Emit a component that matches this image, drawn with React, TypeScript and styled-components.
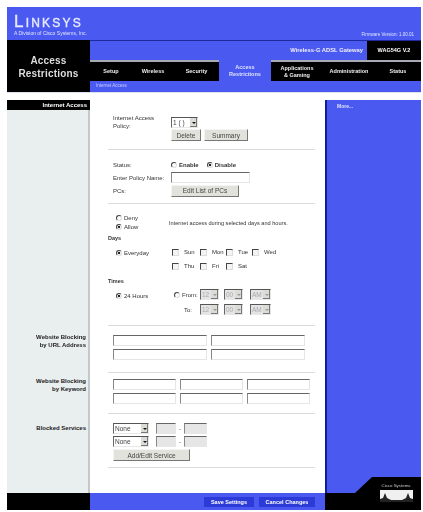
import styled, { createGlobalStyle } from "styled-components";

const GlobalStyle = createGlobalStyle`
  html, body {
    margin: 0;
    padding: 0;
    background: #fff;
    font-family: "Liberation Sans", Arial, sans-serif;
    font-size: 6px;
    color: #333;
  }
`;

const BLUE = "#4a5af0";

const Page = styled.div`
  width: 414px;
  height: 503px;
  margin: 7px 0 0 7px;
  display: flex;
  flex-direction: column;
  filter: blur(0.45px);
`;

const Banner = styled.div`
  height: 33px;
  background: ${BLUE};
  display: flex;
  justify-content: space-between;
  padding: 7px 7px 3px 7px;
  box-sizing: border-box;
`;

const Logo = styled.div`
  display: flex;
  flex-direction: column;
  color: #fff;
`;

const LogoWord = styled.div`
  font-size: 17px;
  line-height: 15px;
  font-weight: 400;
  font-variant: small-caps;
  letter-spacing: 2.2px;
  font-family: "Liberation Sans", sans-serif;
  color: #e6e9ff;
  -webkit-text-stroke: 0.4px #e6e9ff;
`;

const LogoSub = styled.div`
  font-size: 5px;
  line-height: 6px;
  margin-top: 1px;
  color: #dfe3ff;
`;

const Firmware = styled.div`
  align-self: flex-end;
  color: #dfe3ff;
  font-size: 4.5px;
`;

const TopBar = styled.div`
  height: 52px;
  display: grid;
  grid-template-columns: 83px 1fr;
`;

const PageTitle = styled.div`
  background: #000;
  color: #ddd;
  font-size: 10px;
  line-height: 13px;
  font-weight: 700;
  text-align: center;
  padding-top: 14px;
  box-sizing: border-box;
  letter-spacing: 0.2px;
`;

const NavColumn = styled.div`
  display: flex;
  flex-direction: column;
  border-top: 1px solid #1c2a9c;
`;

const ProductRow = styled.div`
  height: 19px;
  display: flex;
  background: ${BLUE};
`;

const ProductName = styled.div`
  flex: 1;
  text-align: right;
  padding-right: 4px;
  color: #eef;
  font-weight: 700;
  font-size: 5.8px;
  line-height: 19px;
`;

const ModelName = styled.div`
  width: 54px;
  background: #000;
  color: #fff;
  font-weight: 700;
  font-size: 5.5px;
  line-height: 19px;
  text-align: center;
`;

const Tabs = styled.div`
  height: 21px;
  display: flex;
  background: #000;
  color: #eee;
  border-top: 2px solid #a9abb4;
  box-sizing: border-box;
`;

const Tab = styled.div<{ $width: number; $active?: boolean }>`
  width: ${(p) => p.$width}px;
  display: flex;
  align-items: center;
  justify-content: center;
  text-align: center;
  font-weight: 700;
  font-size: 5.5px;
  line-height: 7px;
  ${(p) =>
    p.$active &&
    `
    background: ${BLUE};
    margin-top: -2px;
    height: 21px;
    color: #dfe3ff;
  `}
`;

const SubTabs = styled.div`
  height: 11px;
  background: ${BLUE};
  color: #c7ccff;
  font-size: 4.5px;
  line-height: 10px;
  padding-left: 6px;
`;

const Gap = styled.div`
  height: 8px;
  background: #fff;
  border-top: 1px solid #dde2ee;
  box-sizing: border-box;
`;

const Content = styled.div`
  height: 393px;
  display: grid;
  grid-template-columns: 1fr 96px;
`;

const Rows = styled.div`
  display: flex;
  flex-direction: column;
`;

const Row = styled.div<{ $height: number; $grow?: boolean }>`
  display: grid;
  grid-template-columns: 83px 1fr;
  height: ${(p) => p.$height}px;
  ${(p) => p.$grow && "flex: 1;"}
`;

const Side = styled.div`
  background: #e9eeee;
  border-right: 2px solid #c4c8c8;
  text-align: right;
  padding-right: 2px;
  width: 79px;
  font-weight: 700;
  font-size: 6px;
  line-height: 8px;
  color: #222;
`;

const SideHead = styled.div`
  background: #000;
  color: #fff;
  height: 10px;
  line-height: 10px;
  margin-right: -4px;
  padding-right: 3px;
  font-size: 6px;
`;

const SideLabel = styled.div<{ $top: number }>`
  padding-top: ${(p) => p.$top}px;
`;

const Main = styled.div`
  padding: 0 10px 0 18px;
  background: #fff;
`;

const Section = styled.div<{ $height: number; $top: number }>`
  height: ${(p) => p.$height}px;
  padding: ${(p) => p.$top}px 0 0 5px;
  box-sizing: border-box;
  border-bottom: 1px solid #dcdcdc;
`;

const FormRow = styled.div<{ $height: number }>`
  display: grid;
  grid-template-columns: 58px 1fr;
  align-items: center;
  height: ${(p) => p.$height}px;
`;

const Inline = styled.div<{ $gap?: number }>`
  display: flex;
  align-items: center;
  gap: ${(p) => p.$gap ?? 3}px;
`;

const Label = styled.div`
  line-height: 8px;
`;

const AccessNote = styled.div`
  font-size: 5.6px;
`;

const StrongLabel = styled.span`
  font-weight: 700;
`;

const Heading = styled.div<{ $top: number }>`
  font-weight: 700;
  font-size: 5.5px;
  line-height: 9px;
  margin: ${(p) => p.$top}px 0 0 -5px;
`;

// the arrow button of a classic windows select
const SelectBox = styled.div<{ $width: number; $off?: boolean }>`
  position: relative;
  width: ${(p) => p.$width}px;
  height: 11px;
  box-sizing: border-box;
  border: 1px solid #e8e8e8;
  border-top-color: #555;
  border-left-color: #666;
  background: ${(p) => (p.$off ? "#e4e4e4" : "#fff")};
  &::before {
    content: "";
    position: absolute;
    top: 0;
    right: 0;
    width: 7px;
    height: 9px;
    background: #dcdcd6;
    border-right: 1px solid #777;
    border-bottom: 1px solid #777;
    box-sizing: border-box;
  }
  &::after {
    content: "";
    position: absolute;
    top: 4px;
    right: 1.5px;
    border: 2px solid transparent;
    border-top: 2.5px solid ${(p) => (p.$off ? "#999" : "#111")};
    border-bottom: 0;
  }
`;

const NativeSelect = styled.select`
  appearance: none;
  display: block;
  width: 100%;
  height: 9px;
  border: 0;
  margin: 0;
  padding: 0 0 0 1px;
  background: transparent;
  font-family: "Liberation Sans", sans-serif;
  font-size: 6.5px;
  line-height: 9px;
  color: #444;
  &:disabled {
    color: #aaa;
    opacity: 1;
  }
`;

const TextInput = styled.input<{ $width: number; $muted?: boolean }>`
  width: ${(p) => p.$width}px;
  height: 11px;
  box-sizing: border-box;
  margin: 0;
  padding: 0;
  border: 1px solid #e6e6e6;
  border-top-color: #666;
  border-left-color: #888;
  background: ${(p) => (p.$muted ? "#e6e6e6" : "#fff")};
`;

const Button = styled.button<{ $width: number }>`
  width: ${(p) => p.$width}px;
  height: 12px;
  padding: 0;
  margin: 0;
  box-sizing: border-box;
  background: #e2e2dc;
  border: 1px solid;
  border-color: #f4f4f4 #777 #777 #f4f4f4;
  font-family: "Liberation Sans", sans-serif;
  font-size: 6.5px;
  color: #444;
`;

const Radio = styled.input.attrs({ type: "radio" })`
  appearance: none;
  flex: none;
  width: 6px;
  height: 6px;
  margin: 0 2px 0 0;
  box-sizing: border-box;
  border-radius: 50%;
  border: 1px solid;
  border-color: #444 #ddd #ddd #444;
  background: #fff;
  &:checked {
    background: radial-gradient(circle, #222 0 1.3px, #fff 1.6px);
  }
`;

const Check = styled.input.attrs({ type: "checkbox" })`
  appearance: none;
  flex: none;
  width: 7px;
  height: 7px;
  margin: 0 5px 0 0;
  box-sizing: border-box;
  border: 1px solid;
  border-color: #444 #ddd #ddd #444;
  background: #f4f4f4;
`;

const Choice = styled.label`
  display: inline-flex;
  align-items: center;
`;

const DayGrid = styled.div`
  display: grid;
  grid-template-columns: 28px 26px 26px 26px;
  row-gap: 7px;
  line-height: 7px;
`;

const Stack = styled.div<{ $gap: number }>`
  display: flex;
  flex-direction: column;
  gap: ${(p) => p.$gap}px;
`;

const AccessRow = styled.div`
  display: grid;
  grid-template-columns: 53px 1fr;
  align-items: center;
  margin-left: 3px;
`;

const DaysRow = styled.div`
  display: grid;
  grid-template-columns: 56px 1fr;
  margin: 6px 0 0 3px;
  align-items: start;
`;

const EverydayChoice = styled(Choice)`
  height: 7px;
`;

const TimesRow = styled.div`
  display: grid;
  grid-template-columns: 58px 1fr;
  margin: 1px 0 0 3px;
  align-items: start;
`;

const HoursChoice = styled(Choice)`
  height: 17px;
`;

const TimeLine = styled.div`
  display: grid;
  grid-template-columns: 21px 19px 19px 23px;
  column-gap: 5px;
  align-items: center;
  height: 15px;
`;

const ToLabel = styled.div`
  text-align: right;
  padding-right: 3px;
`;

const LastSlot = styled.div`
  justify-self: end;
`;

const InputGrid = styled.div<{ $cols: string }>`
  display: grid;
  grid-template-columns: ${(p) => p.$cols};
  column-gap: 4px;
  row-gap: 3px;
`;

const Aside = styled.div`
  background: ${BLUE};
  border-left: 2px solid #111d9a;
  color: #dfe3ff;
  font-size: 5px;
  font-weight: 700;
  padding: 3px 0 0 10px;
`;

const Footer = styled.div`
  height: 17px;
  display: grid;
  grid-template-columns: 83px 1fr 96px;
`;

const FooterLeft = styled.div`
  background: #000;
`;

const FooterBar = styled.div`
  background: ${BLUE};
  display: flex;
  justify-content: flex-end;
  align-items: center;
  gap: 5px;
  padding-right: 10px;
`;

const FooterButton = styled.div<{ $width: number }>`
  width: ${(p) => p.$width}px;
  height: 10px;
  background: #2c3bd8;
  color: #fff;
  font-weight: 700;
  font-size: 5.5px;
  line-height: 10px;
  text-align: center;
`;

const FooterRight = styled.div`
  background: #000;
  position: relative;
`;

const CornerMark = styled.svg`
  position: absolute;
  left: 0;
  bottom: 0;
`;

function Days() {
  const days = ["Sun", "Mon", "Tue", "Wed", "Thu", "Fri", "Sat"];
  return (
    <DayGrid>
      {days.map((d) => (
        <Choice key={d}>
          <Check />
          {d}
        </Choice>
      ))}
    </DayGrid>
  );
}

function Dropdown({
  width,
  value,
  off,
}: {
  width: number;
  value: string;
  off?: boolean;
}) {
  return (
    <SelectBox $width={width} $off={off}>
      <NativeSelect disabled={off}>
        <option>{value}</option>
      </NativeSelect>
    </SelectBox>
  );
}

function TimeSelects() {
  return (
    <>
      <Dropdown width={19} value="12" off />
      <Dropdown width={19} value="00" off />
      <LastSlot>
        <Dropdown width={21} value="AM" off />
      </LastSlot>
    </>
  );
}

function ServiceRow() {
  return (
    <Inline $gap={7}>
      <Dropdown width={36} value="None" />
      <Inline $gap={3}>
        <TextInput $width={20} $muted />-
        <TextInput $width={23} $muted />
      </Inline>
    </Inline>
  );
}

export default function App() {
  return (
    <>
      <GlobalStyle />
      <Page>
        <Banner>
          <Logo>
            <LogoWord>Linksys</LogoWord>
            <LogoSub>A Division of Cisco Systems, Inc.</LogoSub>
          </Logo>
          <Firmware>Firmware Version: 1.00.01</Firmware>
        </Banner>
        <TopBar>
          <PageTitle>
            Access
            <br />
            Restrictions
          </PageTitle>
          <NavColumn>
            <ProductRow>
              <ProductName>Wireless-G ADSL Gateway</ProductName>
              <ModelName>WAG54G V.2</ModelName>
            </ProductRow>
            <Tabs>
              <Tab $width={42}>Setup</Tab>
              <Tab $width={42}>Wireless</Tab>
              <Tab $width={45}>Security</Tab>
              <Tab $width={52} $active>
                Access
                <br />
                Restrictions
              </Tab>
              <Tab $width={52}>
                Applications
                <br />& Gaming
              </Tab>
              <Tab $width={52}>Administration</Tab>
              <Tab $width={46}>Status</Tab>
            </Tabs>
            <SubTabs>Internet Access</SubTabs>
          </NavColumn>
        </TopBar>
        <Gap />
        <Content>
          <Rows>
            <Row $height={226}>
              <Side>
                <SideHead>Internet Access</SideHead>
              </Side>
              <Main>
                <Section $height={50} $top={14}>
                  <FormRow $height={14}>
                    <Label>
                      Internet Access
                      <br />
                      Policy:
                    </Label>
                    <Dropdown width={27} value="1 ( )" />
                  </FormRow>
                  <FormRow $height={14}>
                    <span />
                    <Inline>
                      <Button $width={30}>Delete</Button>
                      <Button $width={44}>Summary</Button>
                    </Inline>
                  </FormRow>
                </Section>
                <Section $height={54} $top={8}>
                  <FormRow $height={13}>
                    <Label>Status:</Label>
                    <Inline $gap={8}>
                      <Choice>
                        <Radio name="status" />
                        <StrongLabel>Enable</StrongLabel>
                      </Choice>
                      <Choice>
                        <Radio name="status" defaultChecked />
                        <StrongLabel>Disable</StrongLabel>
                      </Choice>
                    </Inline>
                  </FormRow>
                  <FormRow $height={13}>
                    <Label>Enter Policy Name:</Label>
                    <TextInput $width={79} />
                  </FormRow>
                  <FormRow $height={13}>
                    <Label>PCs:</Label>
                    <Button $width={68}>Edit List of PCs</Button>
                  </FormRow>
                </Section>
                <Section $height={122} $top={11}>
                  <AccessRow>
                    <Stack $gap={3}>
                      <Choice>
                        <Radio name="access" />
                        Deny
                      </Choice>
                      <Choice>
                        <Radio name="access" defaultChecked />
                        Allow
                      </Choice>
                    </Stack>
                    <AccessNote>
                      Internet access during selected days and hours.
                    </AccessNote>
                  </AccessRow>
                  <Heading $top={4}>Days</Heading>
                  <DaysRow>
                    <EverydayChoice>
                      <Radio defaultChecked />
                      Everyday
                    </EverydayChoice>
                    <Days />
                  </DaysRow>
                  <Heading $top={7}>Times</Heading>
                  <TimesRow>
                    <HoursChoice>
                      <Radio defaultChecked />
                      24 Hours
                    </HoursChoice>
                    <Stack $gap={0}>
                      <TimeLine>
                        <Choice>
                          <Radio />
                          From:
                        </Choice>
                        <TimeSelects />
                      </TimeLine>
                      <TimeLine>
                        <ToLabel>To:</ToLabel>
                        <TimeSelects />
                      </TimeLine>
                    </Stack>
                  </TimesRow>
                </Section>
              </Main>
            </Row>
            <Row $height={47}>
              <Side>
                <SideLabel $top={7}>
                  Website Blocking
                  <br />
                  by URL Address
                </SideLabel>
              </Side>
              <Main>
                <Section $height={47} $top={9}>
                  <InputGrid $cols="94px 94px">
                    <TextInput $width={94} />
                    <TextInput $width={94} />
                    <TextInput $width={94} />
                    <TextInput $width={94} />
                  </InputGrid>
                </Section>
              </Main>
            </Row>
            <Row $height={41}>
              <Side>
                <SideLabel $top={4}>
                  Website Blocking
                  <br />
                  by Keyword
                </SideLabel>
              </Side>
              <Main>
                <Section $height={41} $top={6}>
                  <InputGrid $cols="63px 63px 63px">
                    <TextInput $width={63} />
                    <TextInput $width={63} />
                    <TextInput $width={63} />
                    <TextInput $width={63} />
                    <TextInput $width={63} />
                    <TextInput $width={63} />
                  </InputGrid>
                </Section>
              </Main>
            </Row>
            <Row $height={79} $grow>
              <Side>
                <SideLabel $top={10}>Blocked Services</SideLabel>
              </Side>
              <Main>
                <Section $height={54} $top={9}>
                  <Stack $gap={2}>
                    <ServiceRow />
                    <ServiceRow />
                    <Button $width={77}>Add/Edit Service</Button>
                  </Stack>
                </Section>
              </Main>
            </Row>
          </Rows>
          <Aside>More...</Aside>
        </Content>
        <Footer>
          <FooterLeft />
          <FooterBar>
            <FooterButton $width={50}>Save Settings</FooterButton>
            <FooterButton $width={56}>Cancel Changes</FooterButton>
          </FooterBar>
          <FooterRight>
            <CornerMark width="96" height="34" viewBox="0 0 96 34">
              <path d="M0 17h30L47 1h49v33H0z" fill="#000" />
              <text
                x="71"
                y="11"
                textAnchor="middle"
                fontSize="4.4"
                fontFamily="Liberation Sans, sans-serif"
                fill="#ccc"
              >
                Cisco Systems
              </text>
              <path d="M55 14h33v12H55z" fill="#f0f0f0" />
              <path
                d="M55 26v-3l3-1 2-5 2 5 4 2h11l4-2 2-5 2 5 3 1v3z"
                fill="#222"
              />
            </CornerMark>
          </FooterRight>
        </Footer>
      </Page>
    </>
  );
}
